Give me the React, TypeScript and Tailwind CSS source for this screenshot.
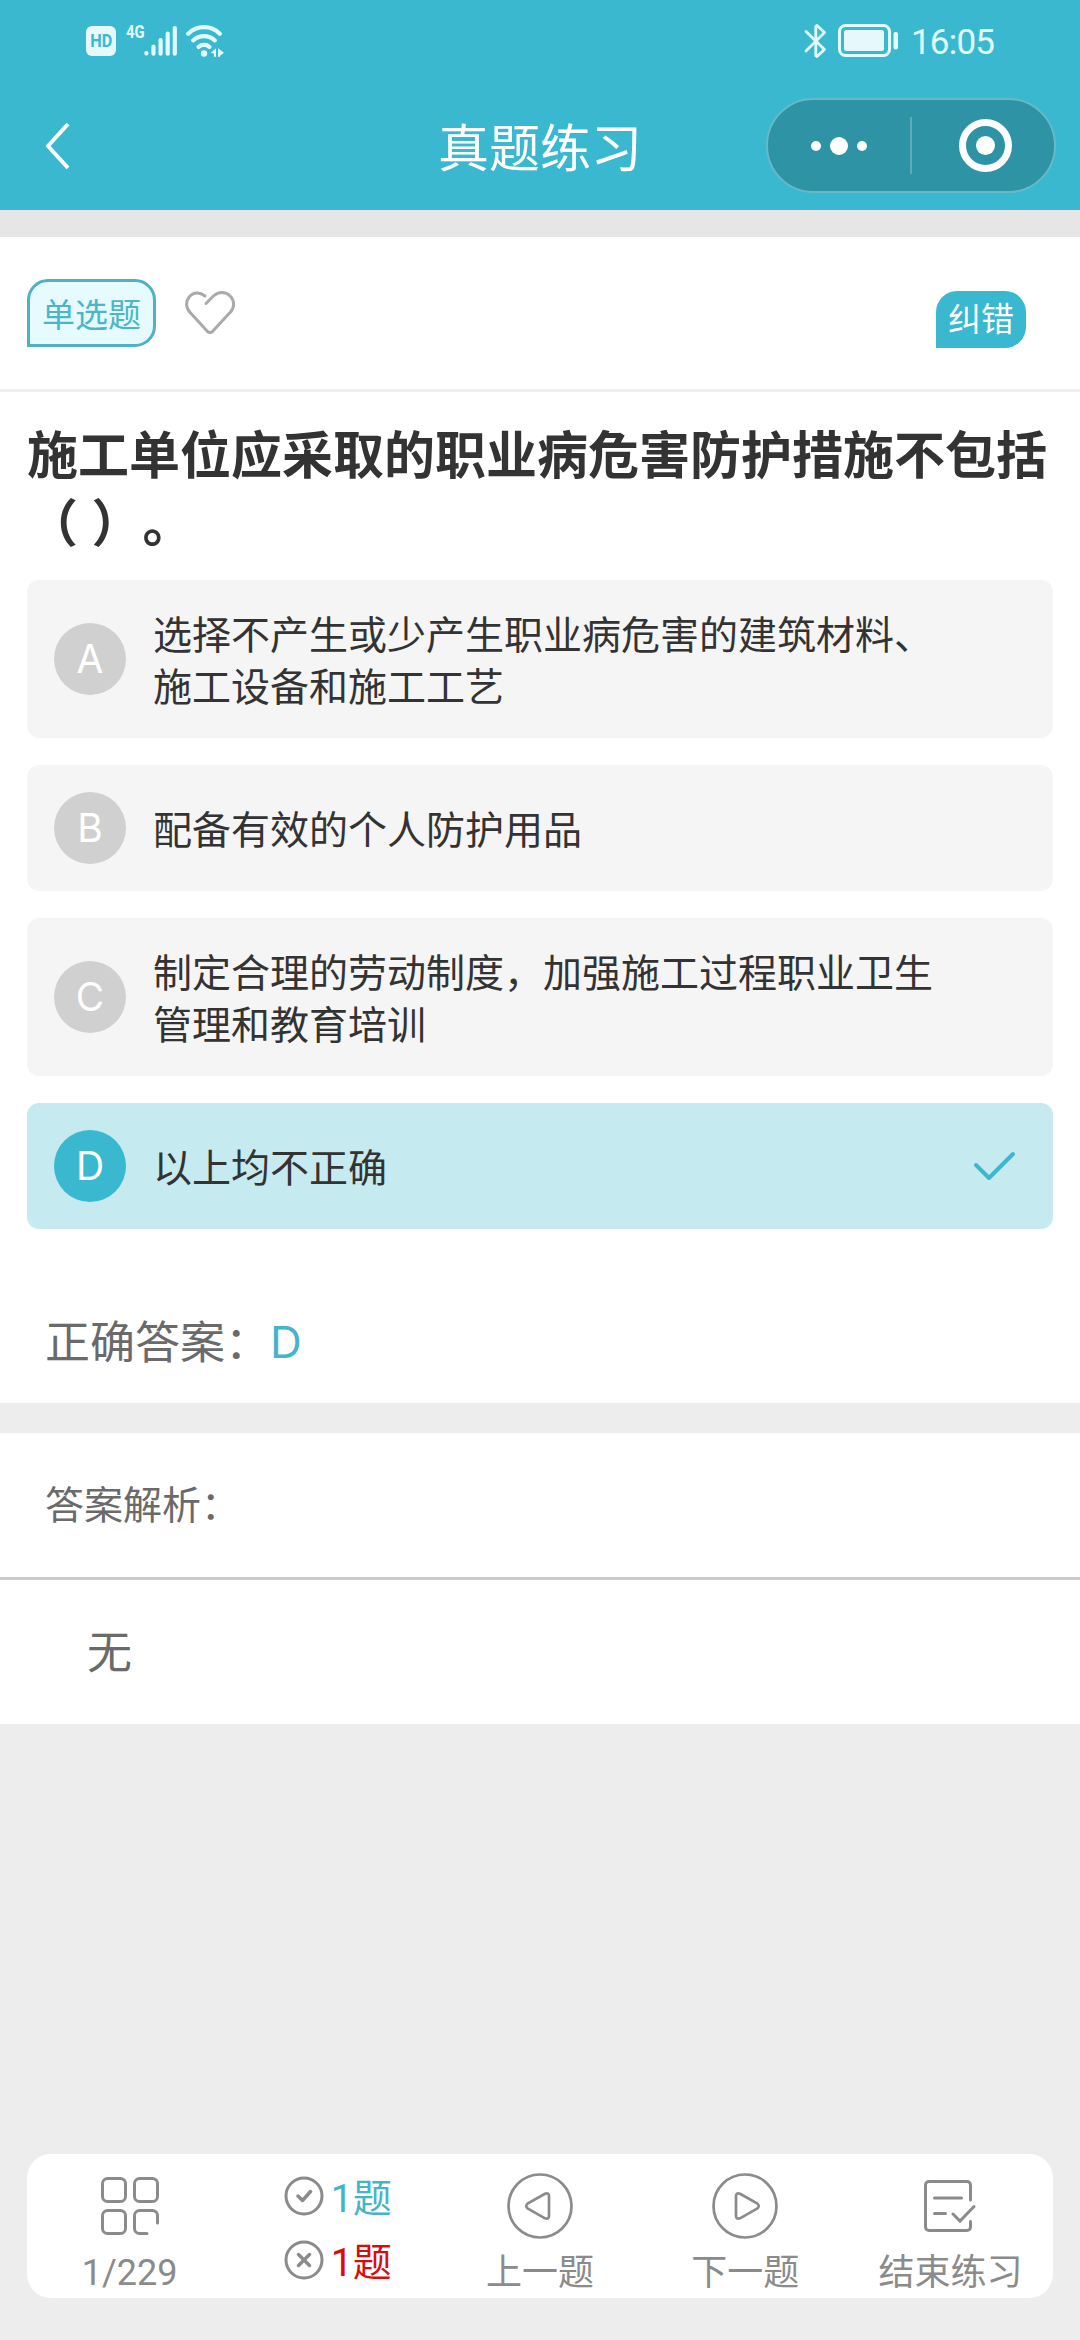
import type { ReactNode } from 'react';

type Option = {
  key: string;
  text: string;
};

const options: Option[] = [
  { key: 'A', text: '选择不产生或少产生职业病危害的建筑材料、施工设备和施工工艺' },
  { key: 'B', text: '配备有效的个人防护用品' },
  { key: 'C', text: '制定合理的劳动制度，加强施工过程职业卫生管理和教育培训' },
  { key: 'D', text: '以上均不正确' },
];

const answer = 'D';

function StatusBar() {
  return (
    <div className="flex h-[81px] items-center justify-between pl-[86px] pr-[85px] text-[#e2fbff]">
      <div className="flex items-center">
        <div className="flex h-[30px] w-[30px] items-center justify-center rounded-[6px] bg-[#e6f8fc] font-['Roboto',sans-serif] text-[18px] font-bold leading-none text-[#3ab8d0]">
          <span className="scale-x-90">HD</span>
        </div>
        <span className="ml-[10px] mb-[19px] w-[18px] origin-left scale-x-[.78] font-['Roboto',sans-serif] text-[19px] font-bold leading-none">
          4G
        </span>
        <svg width="34" height="32" viewBox="0 0 34 32" fill="none" stroke="currentColor" strokeWidth="4.2" strokeLinecap="round">
          <path d="M2.4 28v.6M9.5 21.5v7.2M16.6 15v13.7M23.7 8.5v20.2M30.8 3v25.7" />
        </svg>
        <svg className="ml-[8px]" width="39" height="34" viewBox="0 0 39 34" fill="none" stroke="currentColor" strokeWidth="4.2" strokeLinecap="round">
          <path d="M2.2 9.8C11 1 25 1 33.8 9.8M7.2 16.4c6-5.8 15.6-5.8 21.6 0M12.6 22.9c3-2.6 7.8-2.6 10.8 0" />
          <circle cx="18" cy="29.5" r="3.2" fill="currentColor" stroke="none" />
          <path d="M24.8 28.8l5.2-4.5v8.5h-2v-3zM32 24.3l6 4.5-4 3v1h-2z" fill="currentColor" stroke="none" />
        </svg>
      </div>
      <div className="flex items-center">
        <svg width="23" height="36" viewBox="0 0 23 36" fill="none" stroke="currentColor" strokeWidth="2.8" strokeLinejoin="round" strokeLinecap="round">
          <path d="M2 8.5l18.5 18-7.5 7-1.2-.8V3.3l1.2-.8 7.5 7L2 28" />
        </svg>
        <svg className="ml-[11px]" width="62" height="33" viewBox="0 0 62 33">
          <rect x="1.5" y="1.5" width="50" height="30" rx="6" fill="none" stroke="currentColor" strokeWidth="3" />
          <rect x="6" y="6" width="40" height="21" rx="2.5" fill="#e6f8fc" />
          <rect x="55.5" y="8" width="4.5" height="17.5" rx="2" fill="currentColor" />
        </svg>
        <span className="ml-[11px] mt-[5px] w-[84px] whitespace-nowrap font-['Roboto',sans-serif] text-[35px] leading-[34px] tracking-[-0.8px]">
          16:05
        </span>
      </div>
    </div>
  );
}

function Header() {
  return (
    <header className="h-[210px] bg-[#3ab8d0]">
      <StatusBar />
      <div className="grid h-[129px] grid-cols-[1fr_auto_1fr] items-center text-white">
        <svg className="ml-[44px]" width="28" height="50" viewBox="0 0 28 50" fill="none" stroke="currentColor" strokeWidth="4" strokeLinejoin="round">
          <path d="M24 3L4 25l20 22" />
        </svg>
        <h1 className="pb-[2px] text-[51px] leading-[60px]">真题练习</h1>
        <div className="mr-[24px] flex h-[95px] w-[290px] items-center justify-self-end rounded-full border-2 border-[#66bac8] bg-[#2d93a5]">
          <div className="flex w-[142px] items-center justify-center gap-[9px]">
            <span className="h-[10px] w-[10px] rounded-full bg-white" />
            <span className="h-[18px] w-[18px] rounded-full bg-white" />
            <span className="h-[10px] w-[10px] rounded-full bg-white" />
          </div>
          <div className="h-[57px] w-[2px] bg-[#5fabb9]" />
          <div className="ml-[47px] flex h-[53px] w-[53px] items-center justify-center rounded-full border-[7px] border-white">
            <span className="h-[19px] w-[19px] rounded-full bg-white" />
          </div>
        </div>
      </div>
    </header>
  );
}

function OptionRow({ option, selected }: { option: Option; selected: boolean }) {
  return (
    <div className={`flex items-center rounded-[12px] p-[27px] ${selected ? 'bg-[#c5eaf0]' : 'bg-[#f5f5f5]'}`}>
      <span
        className={`mr-[27px] h-[72px] w-[72px] shrink-0 rounded-full text-center font-['Inter',sans-serif] text-[39px] leading-[71px] text-white ${
          selected ? 'bg-[#3ab8d0]' : 'bg-[#d0d0d0]'
        }`}
      >
        {option.key}
      </span>
      <p className="-my-[1px] w-[790px] pb-[2px] text-[39px] leading-[52px] text-[#333]">{option.text}</p>
      {selected && (
        <svg className="ml-[29px] shrink-0" width="44" height="32" viewBox="0 0 44 32" fill="none" stroke="#41b5cb" strokeWidth="4" strokeLinecap="round" strokeLinejoin="round">
          <path d="M4 15l13 13L41 4" />
        </svg>
      )}
    </div>
  );
}

function NavItem({ icon, label }: { icon: ReactNode; label: string }) {
  return (
    <div className="flex flex-col items-center">
      <div className="flex h-[68px] items-center">{icon}</div>
      <span className="mt-[11px] font-['Roboto','Noto_Sans_CJK_SC',sans-serif] text-[36px] leading-[44px]">{label}</span>
    </div>
  );
}

function Score({ icon, className }: { icon: ReactNode; className: string }) {
  return (
    <div className="flex h-[64px] items-center gap-[7px]">
      <svg width="40" height="40" viewBox="0 0 40 40" fill="none" stroke="#8b8b8b" strokeWidth="3">
        <circle cx="20" cy="20" r="18" />
        {icon}
      </svg>
      <span className={`pt-[5px] font-['Roboto','Noto_Sans_CJK_SC',sans-serif] text-[39px] leading-[48px] ${className}`}>1题</span>
    </div>
  );
}

function BottomBar() {
  return (
    <footer className="mx-[27px] mb-[42px] mt-auto grid h-[144px] grid-cols-5 rounded-[24px] bg-white pt-[18px] text-[#8b8b8b]">
      <NavItem
        label="1/229"
        icon={
          <svg width="58" height="58" viewBox="0 0 58 58" fill="none" stroke="currentColor" strokeWidth="3" strokeLinecap="round">
            <rect x="1.5" y="1.5" width="23" height="23" rx="5" />
            <rect x="33.5" y="1.5" width="23" height="23" rx="5" />
            <rect x="1.5" y="33.5" width="23" height="23" rx="5" />
            <path d="M56.5 46v-7.5a5 5 0 0 0-5-5h-13a5 5 0 0 0-5 5v13a5 5 0 0 0 5 5H46" />
          </svg>
        }
      />
      <div className="-mt-[8px] flex flex-col items-center pl-[6px]">
        <Score className="text-[#45b4c8]" icon={<path d="M14 20l4.5 4.5 8-9" strokeWidth="3.5" strokeLinecap="round" strokeLinejoin="round" />} />
        <Score className="text-[#dc0b0b]" icon={<path d="M14.5 14.5l11 11M25.5 14.5l-11 11" strokeWidth="3.5" strokeLinecap="round" />} />
      </div>
      <NavItem
        label="上一题"
        icon={
          <svg width="66" height="66" viewBox="0 0 66 66" fill="none" stroke="currentColor" strokeWidth="2.7" strokeLinejoin="round">
            <circle cx="33" cy="33" r="31.5" />
            <path d="M20.5 30.6L38 20.7q4-1.500 4 2.500v19.600q0 4-4 2.500L20.500 35.400q-2.500-2.400 0-4.800z" />
          </svg>
        }
      />
      <NavItem
        label="下一题"
        icon={
          <svg width="66" height="66" viewBox="0 0 66 66" fill="none" stroke="currentColor" strokeWidth="2.7" strokeLinejoin="round">
            <circle cx="33" cy="33" r="31.5" />
            <path d="M45.5 30.6L28 20.7q-4-1.500-4 2.500v19.600q0 4 4 2.500l17.500-9.900q2.500-2.400 0-4.800z" />
          </svg>
        }
      />
      <NavItem
        label="结束练习"
        icon={
          <svg width="52" height="52" viewBox="0 0 52 52" fill="none" stroke="currentColor" strokeWidth="3" strokeLinecap="round">
            <path d="M46.5 20V5A3.5 3.5 0 0 0 43 1.5H5A3.5 3.5 0 0 0 1.5 5v42A3.5 3.5 0 0 0 5 50.5h38a3.500 3.500 0 0 0 3.500-3.500v-5.500" />
            <path d="M10.500 18h27M10.500 33.500h11M29 34l7 7 14-14.500" />
          </svg>
        }
      />
    </footer>
  );
}

export default function App() {
  return (
    <div className="flex h-[2340px] w-[1080px] flex-col bg-[#ededed] font-['Noto_Sans_CJK_SC',sans-serif]">
      <Header />
      <div className="h-[27px] bg-[#e6e6e6]" />

      <main className="h-[1166px] bg-white">
        <div className="flex h-[155px] items-start border-b-[3px] border-[#efefef] px-[27px]">
          <span className="mt-[42px] flex h-[68px] w-[129px] items-center justify-center rounded-[21px] rounded-bl-none border-[3px] border-[#4fb1c4] bg-[#e6fbff] text-[33px] leading-none text-[#4bb5c9]">
            单选题
          </span>
          <svg className="ml-[28px] mt-[52px]" width="52" height="47" viewBox="0 0 52 47" fill="none" stroke="#aaaaaa" strokeWidth="3" strokeLinecap="round" strokeLinejoin="round">
            <path d="M21 7C15.5 2.5 9.5 3.200 5.800 7.200c-4.400 4.800-4.200 11.800.4 16.400L23.500 42.500q2.500 2 5 0L46 23.600c4.600-4.600 4.800-11.600.4-16.400-5-5-12-4.700-17-.2L22 14.500" />
          </svg>
          <span className="ml-auto mr-[27px] mt-[54px] flex h-[57px] w-[90px] justify-center rounded-[21px] rounded-bl-none bg-[#3ab8d0] text-[33px] leading-[52px] text-white">
            纠错
          </span>
        </div>

        <h2 className="mt-[26px] px-[27px] text-[51px] font-bold leading-[68px] text-[#333] [text-spacing-trim:space-all] [word-spacing:2px]">
          施工单位应采取的职业病危害防护措施不包括（ ）。
        </h2>

        <div className="mx-[27px] mt-[26px] flex flex-col gap-[27px]">
          {options.map((option) => (
            <OptionRow key={option.key} option={option} selected={option.key === answer} />
          ))}
        </div>

        <div className="mt-[81px] flex px-[45px] text-[45px] leading-[60px] text-[#6a6a6a]">
          <span>正确答案：</span>
          <span className="font-['Inter',sans-serif] text-[44px] leading-[64px] text-[#45b4c8]">{answer}</span>
        </div>
      </main>

      <section className="mt-[30px] bg-white text-[#6a6a6a]">
        <div className="flex h-[147px] items-center border-b-[3px] border-[#cbcbcb] px-[45px] pb-[6px] text-[39px]">
          答案解析：
        </div>
        <div className="flex h-[144px] items-center px-[87px] pb-[4px] text-[45px] leading-[60px]">无</div>
      </section>

      <BottomBar />
    </div>
  );
}
